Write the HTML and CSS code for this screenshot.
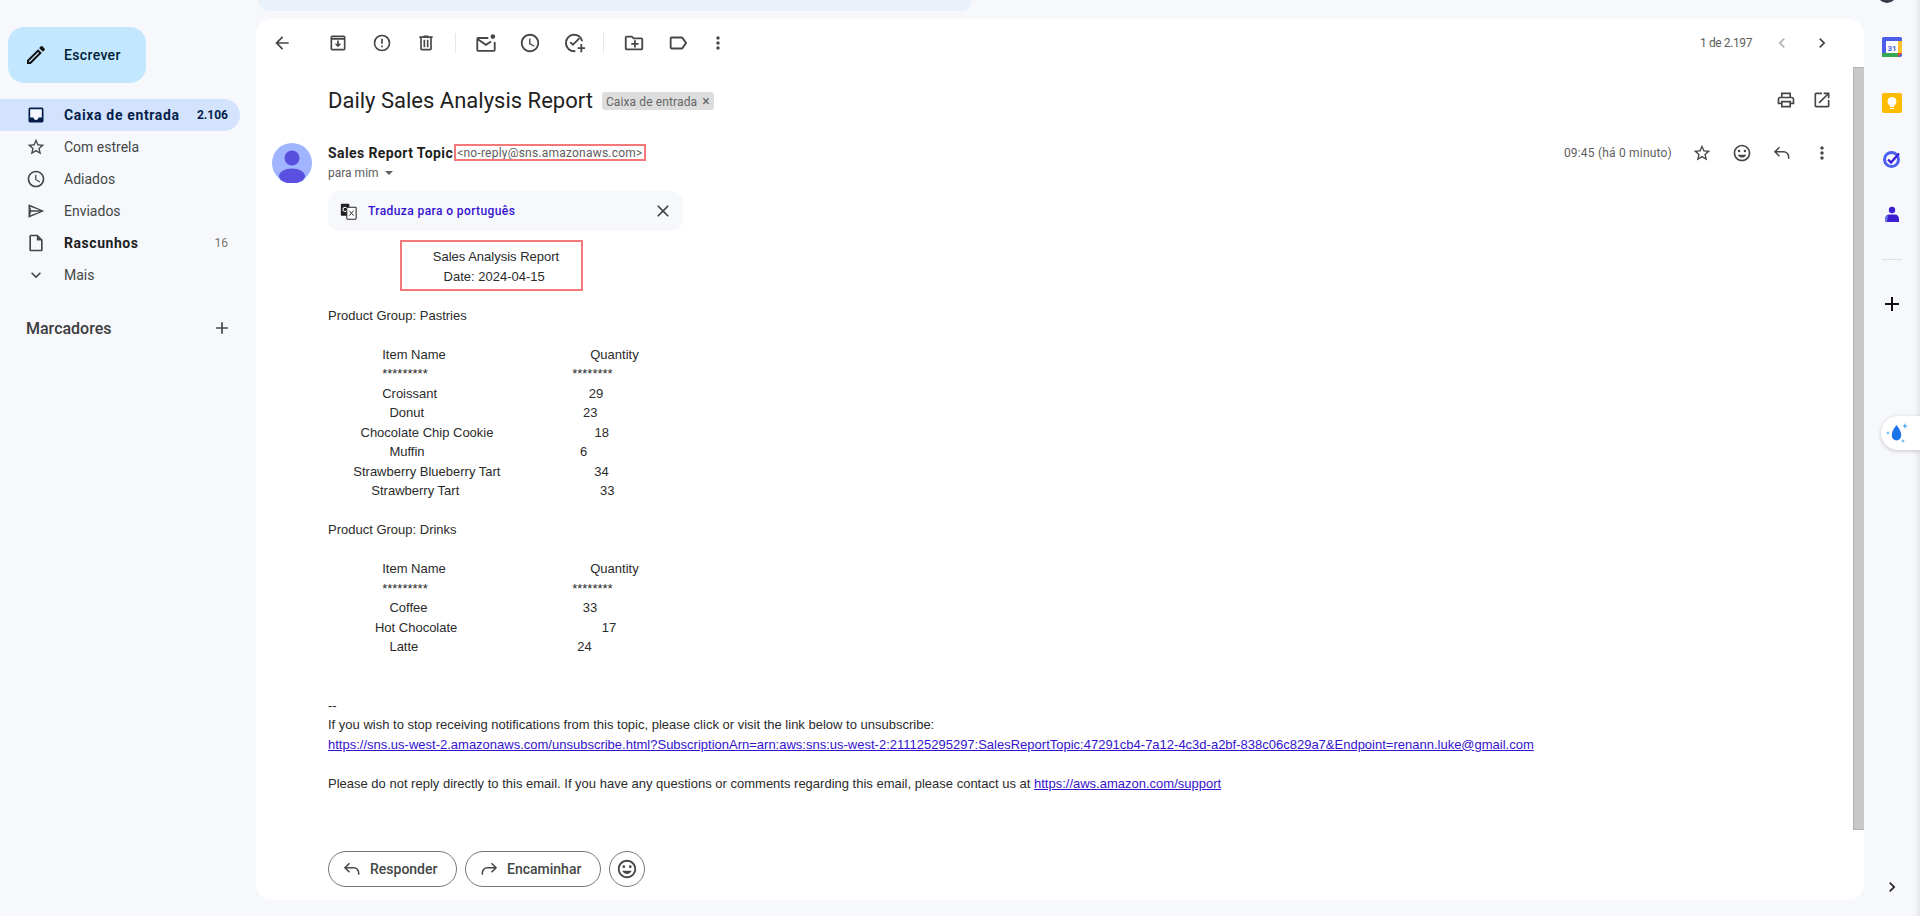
FILE: index.html
```html
<!DOCTYPE html>
<html lang="pt-BR">
<head>
    <meta charset="UTF-8">
    <meta name="viewport" content="width=device-width, initial-scale=1.0">
    <title>Daily Sales Analysis Report - Gmail</title>
    <link rel="stylesheet" href="styles.css">
</head>
<body>

    <!-- Left navigation -->
    <aside class="sidebar">
        <button class="compose">
            <svg class="icon compose-icon" viewBox="0 0 24 24"><path d="M14.06 9.02l.92.92L5.92 19H5v-.92l9.06-9.06M17.66 3c-.25 0-.51.1-.7.29l-1.83 1.83 3.75 3.75 1.83-1.83c.39-.39.39-1.02 0-1.41l-2.34-2.34c-.2-.2-.45-.29-.71-.29zm-3.6 3.19L3 17.25V21h3.75L17.81 9.94l-3.75-3.75z"/></svg>
            <span>Escrever</span>
        </button>
        <nav class="nav">
            <a class="nav-row active">
                <svg class="icon" viewBox="0 0 24 24"><path class="notch" d="M5 5h14v10h-4c0 1.66-1.35 3-3 3s-3-1.34-3-3H5z"/><path d="M19 3H5c-1.1 0-2 .9-2 2v14c0 1.1.9 2 2 2h14c1.1 0 2-.9 2-2V5c0-1.1-.9-2-2-2zm0 12h-4c0 1.66-1.35 3-3 3s-3-1.34-3-3H5V5h14v10z"/></svg>
                <span class="nav-label">Caixa de entrada</span>
                <span class="nav-count">2.106</span>
            </a>
            <a class="nav-row">
                <svg class="icon" viewBox="0 0 24 24"><path d="M22 9.24l-7.19-.62L12 2 9.19 8.63 2 9.24l5.46 4.73L5.82 21 12 17.27 18.18 21l-1.63-7.03L22 9.24zM12 15.4l-3.76 2.27 1-4.28-3.32-2.88 4.38-.38L12 6.1l1.71 4.04 4.38.38-3.32 2.88 1 4.28L12 15.4z"/></svg>
                <span class="nav-label">Com estrela</span>
            </a>
            <a class="nav-row">
                <svg class="icon" viewBox="0 0 24 24"><path d="M11.99 2C6.47 2 2 6.48 2 12s4.47 10 9.99 10C17.52 22 22 17.52 22 12S17.52 2 11.99 2zM12 20c-4.42 0-8-3.58-8-8s3.58-8 8-8 8 3.58 8 8-3.58 8-8 8zm.5-13H11v6l5.25 3.15.75-1.23-4.5-2.67z"/></svg>
                <span class="nav-label">Adiados</span>
            </a>
            <a class="nav-row">
                <svg class="icon" viewBox="0 0 24 24"><path d="M3 4v16l19-8L3 4zm2 3l11.6 4H6.2L5 7zm0 10l1.2-4h10.4L5 17z"/></svg>
                <span class="nav-label">Enviados</span>
            </a>
            <a class="nav-row strong">
                <svg class="icon" viewBox="0 0 24 24"><path d="M14 2H6c-1.1 0-2 .9-2 2v16c0 1.1.9 2 2 2h12c1.1 0 2-.9 2-2V8l-6-6zm4 18H6V4h7v5h5v11z"/></svg>
                <span class="nav-label">Rascunhos</span>
                <span class="nav-count">16</span>
            </a>
            <a class="nav-row">
                <svg class="icon" viewBox="0 0 24 24"><path d="M16.59 8.59L12 13.17 7.41 8.59 6 10l6 6 6-6z"/></svg>
                <span class="nav-label">Mais</span>
            </a>
        </nav>
        <div class="labels-head">
            <span>Marcadores</span>
            <svg class="icon" viewBox="0 0 24 24"><path d="M19 13h-6v6h-2v-6H5v-2h6V5h2v6h6v2z"/></svg>
        </div>
    </aside>

    <main class="main">
        <div class="search-sliver"></div>
        <section class="card">

            <!-- Toolbar -->
            <div class="toolbar">
                <button class="tool back"><svg class="icon" viewBox="0 0 24 24"><path d="M20 11H7.83l5.59-5.59L12 4l-8 8 8 8 1.41-1.41L7.83 13H20v-2z"/></svg></button>
                <button class="tool"><svg class="icon" viewBox="0 0 24 24"><path d="M19 3H5c-1.1 0-2 .9-2 2v14c0 1.1.9 2 2 2h14c1.1 0 2-.9 2-2V5c0-1.1-.9-2-2-2zm0 16H5V8h14v11zM5 6V5h14v1H5zm8 3h-2v4H8l4 4 4-4h-3V9z"/></svg></button>
                <button class="tool"><svg class="icon" viewBox="0 0 24 24"><path d="M12 2a10 10 0 1 0 0 20 10 10 0 0 0 0-20zm0 18a8 8 0 1 1 0-16 8 8 0 0 1 0 16zm-1-5h2v2h-2zm0-8h2v6h-2z"/></svg></button>
                <button class="tool"><svg class="icon" viewBox="0 0 24 24"><path d="M15 4V3H9v1H4v2h1v13c0 1.1.9 2 2 2h10c1.1 0 2-.9 2-2V6h1V4h-5zm2 15H7V6h10v13zM9 8h2v9H9zm4 0h2v9h-2z"/></svg></button>
                <span class="tool-sep"></span>
                <button class="tool"><svg class="icon large" viewBox="0 0 24 24"><path d="M14.5 6.5H3.5a1 1 0 0 0-1 1v12a1 1 0 0 0 1 1h17a1 1 0 0 0 1-1V11" fill="none" stroke="#444746" stroke-width="2"/><path d="M3 8l9 6 5.5-3.7" fill="none" stroke="#444746" stroke-width="2"/><circle cx="19.5" cy="5" r="2.5"/></svg></button>
                <button class="tool"><svg class="icon large" viewBox="0 0 24 24"><path d="M11.99 2C6.47 2 2 6.48 2 12s4.47 10 9.99 10C17.52 22 22 17.52 22 12S17.52 2 11.99 2zM12 20c-4.42 0-8-3.58-8-8s3.58-8 8-8 8 3.58 8 8-3.58 8-8 8zm.5-13H11v6l5.25 3.15.75-1.23-4.5-2.67z"/></svg></button>
                <button class="tool"><svg class="icon large" viewBox="0 0 24 24"><path d="M12 2a10 10 0 1 0 1.5 19.9v-2A8 8 0 1 1 20 10h2A10 10 0 0 0 12 2zm-1.2 13.4l-3.6-3.6 1.4-1.4 2.2 2.2 6.8-6.8 1.4 1.4-8.2 8.2zM19 13h2v3.5h3v2h-3V22h-2v-3.5h-3v-2h3V13z"/></svg></button>
                <span class="tool-sep"></span>
                <button class="tool"><svg class="icon large" viewBox="0 0 24 24"><path d="M20 6h-8l-2-2H4c-1.1 0-2 .9-2 2v12c0 1.1.9 2 2 2h16c1.1 0 2-.9 2-2V8c0-1.1-.9-2-2-2zm0 12H4V6h5.17l2 2H20v10zm-8-1h2v-3h3v-2h-3V9h-2v3H9v2h3z"/></svg></button>
                <button class="tool"><svg class="icon large" viewBox="0 0 24 24"><path d="M17.63 5.84C17.27 5.33 16.67 5 16 5L5 5.01C3.9 5.01 3 5.9 3 7v10c0 1.1.9 1.99 2 1.99L16 19c.67 0 1.27-.33 1.63-.84L22 12l-4.37-6.16zM16 17H5V7h11l3.55 5L16 17z"/></svg></button>
                <button class="tool narrow"><svg class="icon" viewBox="0 0 24 24"><path d="M12 8c1.1 0 2-.9 2-2s-.9-2-2-2-2 .9-2 2 .9 2 2 2zm0 2c-1.1 0-2 .9-2 2s.9 2 2 2 2-.9 2-2-.9-2-2-2zm0 6c-1.1 0-2 .9-2 2s.9 2 2 2 2-.9 2-2-.9-2-2-2z"/></svg></button>
                <span class="pager">1 de 2.197</span>
                <button class="tool pager-btn off"><svg class="icon" viewBox="0 0 24 24"><path d="M15.41 7.41L14 6l-6 6 6 6 1.41-1.41L10.83 12z"/></svg></button>
                <button class="tool pager-btn"><svg class="icon" viewBox="0 0 24 24"><path d="M8.59 16.59L10 18l6-6-6-6-1.41 1.41L13.17 12z"/></svg></button>
            </div>

            <div class="scroll-area">
                <div class="message">
                    <div class="subject-row">
                        <h1 class="subject">Daily Sales Analysis Report</h1>
                        <span class="chip">Caixa de entrada <span class="chip-x">×</span></span>
                        <button class="subject-btn print"><svg class="icon" viewBox="0 0 24 24"><path d="M19 8h-1V3H6v5H5c-1.66 0-3 1.34-3 3v6h4v4h12v-4h4v-6c0-1.66-1.34-3-3-3zM8 5h8v3H8V5zm8 12v2H8v-4h8v2zm2-2v-2H6v2H4v-4c0-.55.45-1 1-1h14c.55 0 1 .45 1 1v4h-2z"/></svg></button>
                        <button class="subject-btn"><svg class="icon" viewBox="0 0 24 24"><path d="M19 19H5V5h7V3H5c-1.11 0-2 .9-2 2v14c0 1.1.89 2 2 2h14c1.1 0 2-.9 2-2v-7h-2v7zM14 3v2h3.59l-9.83 9.83 1.41 1.41L19 6.41V10h2V3h-7z"/></svg></button>
                    </div>

                    <div class="sender-row">
                        <svg class="avatar" viewBox="0 0 40 40"><circle cx="20" cy="20" r="20" fill="#a0b4ff"/><circle cx="20" cy="15" r="7.5" fill="#5a50e0"/><ellipse cx="20" cy="33" rx="13" ry="7.5" fill="#5a50e0"/></svg>
                        <div class="sender-col">
                            <div class="sender-head">
                                <div>
                                    <div class="from"><span class="from-name">Sales Report Topic</span><span class="from-addr">&lt;no-reply@sns.amazonaws.com&gt;</span></div>
                                    <div class="to">para mim <span class="caret"></span></div>
                                </div>
                                <div class="head-actions">
                                    <span class="time">09:45 (há 0 minuto)</span>
                                    <button class="tool wide"><svg class="icon" viewBox="0 0 24 24"><path d="M22 9.24l-7.19-.62L12 2 9.19 8.63 2 9.24l5.46 4.73L5.82 21 12 17.27 18.18 21l-1.63-7.03L22 9.24zM12 15.4l-3.76 2.27 1-4.28-3.32-2.88 4.38-.38L12 6.1l1.71 4.04 4.38.38-3.32 2.88 1 4.28L12 15.4z"/></svg></button>
                                    <button class="tool wide"><svg class="icon" viewBox="0 0 24 24"><path d="M11.99 2C6.47 2 2 6.48 2 12s4.47 10 9.99 10C17.52 22 22 17.52 22 12S17.52 2 11.99 2zM12 20c-4.42 0-8-3.58-8-8s3.58-8 8-8 8 3.58 8 8-3.58 8-8 8z"/><circle cx="8.5" cy="9.5" r="1.5"/><circle cx="15.5" cy="9.5" r="1.5"/><path d="M12 17.5c2.33 0 4.31-1.46 5.11-3.5H6.89c.8 2.04 2.78 3.5 5.11 3.5z"/></svg></button>
                                    <button class="tool wide"><svg class="icon" viewBox="0 0 24 24"><path d="M9 5L3.5 10.5 9 16M4 10.5h10a6 6 0 0 1 6 6V19" fill="none" stroke="#444746" stroke-width="1.8"/></svg></button>
                                    <button class="tool wide"><svg class="icon" viewBox="0 0 24 24"><path d="M12 8c1.1 0 2-.9 2-2s-.9-2-2-2-2 .9-2 2 .9 2 2 2zm0 2c-1.1 0-2 .9-2 2s.9 2 2 2 2-.9 2-2-.9-2-2-2zm0 6c-1.1 0-2 .9-2 2s.9 2 2 2 2-.9 2-2-.9-2-2-2z"/></svg></button>
                                </div>
                            </div>

                            <div class="translate">
                                <svg class="translate-icon" viewBox="0 0 20 20"><rect x="1" y="1" width="10" height="14" rx="1" fill="#222"/><circle cx="6" cy="7.5" r="2.5" fill="none" stroke="#fff" stroke-width="1.2"/><rect x="8" y="5" width="11" height="14" rx="1" fill="#fff" stroke="#222" stroke-width="1.2"/><path d="M11 9l5 6M16 9l-5 6" stroke="#222" stroke-width="1" fill="none"/></svg>
                                <span class="translate-link">Traduza para o português</span>
                                <svg class="icon translate-close" viewBox="0 0 24 24"><path d="M19 6.41L17.59 5 12 10.59 6.41 5 5 6.41 10.59 12 5 17.59 6.41 19 12 13.41 17.59 19 19 17.59 13.41 12z"/></svg>
                            </div>

<pre class="mail-body">                             Sales Analysis Report
                                Date: 2024-04-15

Product Group: Pastries

               Item Name                                        Quantity
               *********                                        ********
               Croissant                                          29
                 Donut                                            23
         Chocolate Chip Cookie                            18
                 Muffin                                           6
       Strawberry Blueberry Tart                          34
            Strawberry Tart                                       33

Product Group: Drinks

               Item Name                                        Quantity
               *********                                        ********
                 Coffee                                           33
             Hot Chocolate                                        17
                 Latte                                            24


--
If you wish to stop receiving notifications from this topic, please click or visit the link below to unsubscribe:
<a href="#">https://sns.us-west-2.amazonaws.com/unsubscribe.html?SubscriptionArn=arn:aws:sns:us-west-2:211125295297:SalesReportTopic:47291cb4-7a12-4c3d-a2bf-838c06c829a7&amp;Endpoint=renann.luke@gmail.com</a>

Please do not reply directly to this email. If you have any questions or comments regarding this email, please contact us at <a href="#">https://aws.amazon.com/support</a></pre>
                        </div>
                    </div>

                    <!-- Reply buttons -->
                    <div class="reply-row">
                        <button class="pill reply"><svg class="icon" viewBox="0 0 24 24"><path d="M9 5L3.5 10.5 9 16M4 10.5h10a6 6 0 0 1 6 6V19" fill="none" stroke="#444746" stroke-width="1.8"/></svg>Responder</button>
                        <button class="pill forward"><svg class="icon" viewBox="0 0 24 24"><path d="M15 5l5.5 5.5L15 16M20 10.5H10a6 6 0 0 0-6 6V19" fill="none" stroke="#444746" stroke-width="1.8"/></svg>Encaminhar</button>
                        <button class="pill round"><svg class="icon large" viewBox="0 0 24 24"><path d="M11.99 2C6.47 2 2 6.48 2 12s4.47 10 9.99 10C17.52 22 22 17.52 22 12S17.52 2 11.99 2zM12 20c-4.42 0-8-3.58-8-8s3.58-8 8-8 8 3.58 8 8-3.58 8-8 8z"/><circle cx="8.5" cy="9.5" r="1.5"/><circle cx="15.5" cy="9.5" r="1.5"/><path d="M12 17.5c2.33 0 4.31-1.46 5.11-3.5H6.89c.8 2.04 2.78 3.5 5.11 3.5z"/></svg></button>
                    </div>
                </div>
                <div class="scrollbar"><div class="thumb"></div></div>
            </div>

            <!-- Red boxes drawn over the screenshot -->
            <div class="mark mark-addr"></div>
            <div class="mark mark-title"></div>
        </section>
    </main>

    <!-- Right side apps -->
    <aside class="rail">
        <div class="rail-avatar"></div>
        <div class="rail-item">
            <svg class="rail-icon" viewBox="0 0 20 20"><rect width="20" height="20" rx="2" fill="#4a5ee8"/><rect x="15" y="4" width="5" height="13" fill="#fbc02d"/><rect y="16" width="16" height="4" fill="#34a853"/><path d="M16 16h4l-4 4z" fill="#ea4335"/><rect x="4" y="4" width="12" height="12" fill="#fff"/><text x="10" y="13.5" class="cal-num">31</text></svg>
        </div>
        <div class="rail-item">
            <svg class="rail-icon" viewBox="0 0 20 20"><rect width="20" height="20" rx="2" fill="#ffbb00"/><circle cx="10" cy="8.5" r="4.5" fill="#fff"/><rect x="8" y="12" width="4" height="2" fill="#fff"/><rect x="8" y="15" width="4" height="1" fill="#fff"/></svg>
        </div>
        <div class="rail-item">
            <svg class="rail-icon" viewBox="0 0 20 20"><circle cx="9.5" cy="10.5" r="7" fill="none" stroke="#4b5ff0" stroke-width="3"/><path d="M6 10.5l3 3 8-9" fill="none" stroke="#3a1fd8" stroke-width="2.4"/></svg>
        </div>
        <div class="rail-item">
            <svg class="rail-icon" viewBox="0 0 20 20"><circle cx="10" cy="5" r="3.2" fill="#3d1ed0"/><path d="M3 17v-3c0-3 2-4.500 4-4.500h6c2 0 4 1.500 4 4.500v3z" fill="#3d1ed0"/><path d="M3 14c0-2 1-3.500 3-4l-1 7H3z" fill="#6a78e8"/></svg>
        </div>
        <div class="rail-sep"></div>
        <div class="rail-item">
            <svg class="rail-plus" viewBox="0 0 24 24"><path d="M19 13h-6v6h-2v-6H5v-2h6V5h2v6h6v2z"/></svg>
        </div>
        <svg class="rail-chevron" viewBox="0 0 24 24"><path d="M8.59 16.59L10 18l6-6-6-6-1.41 1.41L13.17 12z"/></svg>
        <div class="drop-pill">
            <svg class="drop-icon" viewBox="0 0 24 24"><path d="M12.5 4c3 4 4.7 6.5 4.7 10.5a4.7 5 0 0 1-9.400 0C7.800 10.500 9.500 8 12.500 4z" fill="#1a73e8"/><path d="M21 2l.8 2.200 2.200.8-2.200.8L21 8l-.8-2.200-2.200-.8 2.200-.8zM4 10l.6 1.400 1.400.6-1.400.6L4 14l-.6-1.400L2 12l1.400-.6zM19 18l.6 1.400 1.400.6-1.400.6-.6 1.400-.6-1.400-1.400-.6 1.400-.6z" fill="#4aa8f0"/></svg>
        </div>
    </aside>

</body>
</html>
```

FILE: styles.css
```css
* {
    box-sizing: border-box;
}
html, body {
    height: 100%;
}
body {
    margin: 0;
    display: flex;
    overflow: hidden;
    background-color: #f6f8fc;
    color: #202124;
    font-family: Roboto, Arial, sans-serif;
    font-size: 14px;
}
button {
    padding: 0;
    border: none;
    background: none;
    font-family: inherit;
    cursor: pointer;
}
.icon {
    width: 20px;
    height: 20px;
    flex-shrink: 0;
    fill: #444746;
}
.icon.large {
    width: 22px;
    height: 22px;
}

/* Sidebar */
.sidebar {
    width: 256px;
    flex-shrink: 0;
    padding-top: 27px;
}
.compose {
    display: flex;
    align-items: center;
    width: 138px;
    height: 56px;
    margin-left: 8px;
    padding-left: 18px;
    border-radius: 16px;
    background-color: #c2e7ff;
    color: #001d35;
    font-size: 14px;
    font-weight: 500;
    letter-spacing: .35px;
}
.compose span {
    margin-left: 16px;
}
.compose-icon {
    width: 24px;
    height: 24px;
    margin-left: -2px;
    fill: #111;
}
.nav {
    margin-top: 16px;
}
.nav-row {
    display: flex;
    align-items: center;
    width: 240px;
    height: 32px;
    padding: 0 12px 0 26px;
    border-radius: 0 16px 16px 0;
    color: #444746;
}
.nav-label {
    flex: 1;
    margin-left: 18px;
}
.nav-count {
    font-size: 12px;
    color: #757775;
}
.nav-row.active {
    background-color: #d3e3fd;
    color: #041e49;
    font-weight: 700;
    letter-spacing: .65px;
}
.nav-row.active .nav-count {
    color: #041e49;
    letter-spacing: 0;
}
.nav-row.active .icon {
    fill: #041e49;
}
.nav-row.active .notch {
    fill: #f3f6ff;
}
.nav-row.strong .nav-label {
    font-weight: 700;
    letter-spacing: .55px;
    color: #202124;
}
.labels-head {
    display: flex;
    align-items: center;
    justify-content: space-between;
    width: 240px;
    margin-top: 21px;
    padding: 0 8px 0 26px;
    height: 32px;
    font-size: 16px;
    font-weight: 500;
    color: #3c3c3c;
}

/* Main card */
.main {
    flex: 1;
    display: flex;
    flex-direction: column;
    padding-bottom: 16px;
}
.search-sliver {
    width: 714px;
    height: 11px;
    margin-left: 2px;
    flex-shrink: 0;
    border-radius: 0 0 18px 18px;
    background-color: #eaf1fb;
}
.card {
    position: relative;
    flex: 1;
    display: flex;
    flex-direction: column;
    margin-top: 8px;
    border-radius: 16px;
    background-color: #fff;
    overflow: hidden;
}
.toolbar {
    display: flex;
    align-items: center;
    height: 48px;
    flex-shrink: 0;
    padding: 0 22px 0 4px;
}
.tool {
    display: flex;
    align-items: center;
    justify-content: center;
    width: 44px;
    height: 40px;
    flex-shrink: 0;
}
.tool.back {
    margin-right: 12px;
}
.tool.narrow {
    width: 36px;
}
.tool.wide, .tool.pager-btn {
    width: 40px;
}
.tool-sep {
    width: 1px;
    height: 20px;
    margin: 0 8px 0 7px;
    background-color: #e4e6ea;
}
.pager {
    margin-left: auto;
    margin-right: 10px;
    font-size: 12px;
    letter-spacing: -.4px;
    color: #5e5e5e;
}
.off .icon {
    fill: #b0b2b4;
}
.scroll-area {
    flex: 1;
    display: flex;
    min-height: 0;
}
.message {
    flex: 1;
    min-width: 0;
}
.scrollbar {
    width: 11px;
    flex-shrink: 0;
}
.thumb {
    height: 763px;
    border-top: 1px solid #b4b4b4;
    border-bottom: 1px solid #b4b4b4;
    border-left: 1px solid #b4b4b4;
    background-color: #c8c8c8;
}

/* Subject */
.subject-row {
    display: flex;
    align-items: center;
    height: 40px;
    margin-top: 13px;
    padding: 0 13px 0 72px;
}
.subject {
    margin: 0;
    font-size: 22px;
    font-weight: 400;
    color: #1f1f1f;
}
.chip {
    display: inline-block;
    height: 18px;
    margin: 2px 0 0 9px;
    padding: 0 4px;
    border-radius: 3px;
    background-color: #dddddd;
    color: #666;
    font-size: 12px;
    letter-spacing: .12px;
    line-height: 18px;
}
.chip-x {
    font-size: 14px;
    margin-left: 2px;
}
.subject-btn {
    display: flex;
    align-items: center;
    justify-content: center;
    width: 36px;
    height: 36px;
}
.subject-btn.print {
    margin-left: auto;
}

/* Sender */
.sender-row {
    display: flex;
    gap: 16px;
    margin-top: 23px;
    padding-left: 16px;
}
.avatar {
    width: 40px;
    height: 40px;
    flex-shrink: 0;
}
.sender-col {
    flex: 1;
    min-width: 0;
}
.sender-head {
    display: flex;
    justify-content: space-between;
    height: 39px;
    padding-right: 11px;
}
.from {
    display: flex;
    align-items: center;
    height: 20px;
}
.from-name {
    font-weight: 700;
    letter-spacing: .4px;
    color: #1f1f1f;
}
.from-addr {
    margin-left: 4px;
    font-size: 12px;
    letter-spacing: .22px;
    color: #5e5e5e;
}
.to {
    display: flex;
    align-items: center;
    height: 19px;
    font-size: 12px;
    color: #5e5e5e;
}
.caret {
    width: 0;
    height: 0;
    margin-left: 6px;
    border-left: 4px solid transparent;
    border-right: 4px solid transparent;
    border-top: 4px solid #5e5e5e;
}
.head-actions {
    display: flex;
    align-items: center;
    height: 20px;
}
.time {
    margin-right: 10px;
    font-size: 12px;
    letter-spacing: .2px;
    color: #5e5e5e;
}

/* Translate bar */
.translate {
    display: flex;
    align-items: center;
    width: 355px;
    height: 40px;
    margin-top: 9px;
    padding: 0 10px 0 12px;
    border-radius: 12px;
    background-color: #f6f8fc;
}
.translate-icon {
    width: 17px;
    height: 17px;
    flex-shrink: 0;
}
.translate-link {
    flex: 1;
    margin-left: 11px;
    color: #3413d0;
    font-size: 12px;
    font-weight: 500;
    letter-spacing: .4px;
}

/* Mail body */
.mail-body {
    margin: 16px 0 0;
    font-family: "Liberation Sans", Arial, sans-serif;
    font-size: 13px;
    line-height: 19.5px;
    color: #2b2b2b;
}
.mail-body a {
    color: #3413d0;
}

/* Reply */
.reply-row {
    display: flex;
    gap: 8px;
    margin-top: 57.5px;
    padding-left: 72px;
}
.pill {
    display: flex;
    align-items: center;
    height: 36px;
    border: 1px solid #747775;
    border-radius: 18px;
    color: #444746;
    font-size: 14px;
    font-weight: 500;
}
.pill .icon {
    margin-right: 8px;
}
.reply {
    width: 129px;
    padding-left: 13px;
}
.forward {
    width: 136px;
    padding-left: 13px;
}
.round {
    justify-content: center;
    width: 36px;
}
.pill.round .icon {
    margin-right: 0;
}

/* Red annotation boxes */
.mark {
    position: absolute;
    border: 2px solid #f4777a;
}
.mark-addr {
    left: 198px;
    top: 125px;
    width: 192px;
    height: 17px;
}
.mark-title {
    left: 144px;
    top: 221px;
    width: 183px;
    height: 51px;
}

/* Right rail */
.rail {
    position: relative;
    display: flex;
    flex-direction: column;
    align-items: center;
    width: 56px;
    flex-shrink: 0;
    padding-top: 19px;
    box-shadow: inset -6px 0 6px -5px rgba(0, 0, 0, .12);
}
.rail-avatar {
    position: absolute;
    top: -17px;
    left: 13px;
    width: 20px;
    height: 20px;
    border-radius: 50%;
    background-color: #3a3a48;
}
.rail-item {
    display: flex;
    align-items: center;
    justify-content: center;
    width: 100%;
    height: 56px;
}
.rail-icon {
    width: 20px;
    height: 20px;
}
.cal-num {
    font-family: Roboto, Arial, sans-serif;
    font-size: 8px;
    font-weight: 700;
    fill: #4a5ee8;
    text-anchor: middle;
}
.rail-sep {
    width: 20px;
    height: 1px;
    margin: 16px 0;
    background-color: #dfe1e5;
}
.rail-plus {
    width: 24px;
    height: 24px;
    fill: #111;
}
.rail-chevron {
    width: 20px;
    height: 20px;
    margin-top: auto;
    margin-bottom: 19px;
    fill: #222;
}
.drop-pill {
    position: absolute;
    left: 17px;
    top: 416px;
    display: flex;
    align-items: center;
    width: 39px;
    height: 34px;
    padding-left: 3px;
    border-radius: 17px 0 0 17px;
    background-color: #fff;
    box-shadow: 0 1px 4px rgba(0, 0, 0, .2);
}
.drop-icon {
    width: 24px;
    height: 24px;
    flex-shrink: 0;
}
```
